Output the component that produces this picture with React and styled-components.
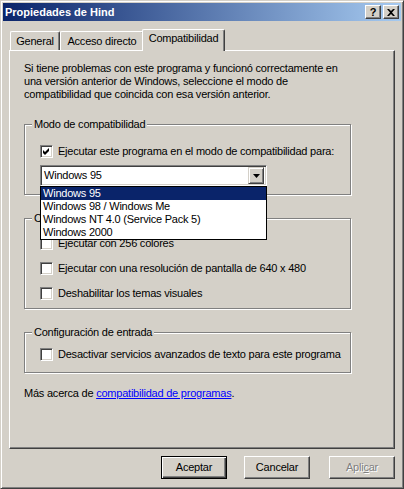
import styled, { createGlobalStyle } from 'styled-components';

const GlobalStyle = createGlobalStyle`
  html, body {
    margin: 0;
    padding: 0;
    background: #d4d0c8;
  }
  body {
    font-family: "Liberation Sans", Arial, sans-serif;
    font-size: 11px;
    letter-spacing: -0.22px;
    color: #000;
  }
`;

const Window = styled.div`
  width: 404px;
  height: 489px;
  box-sizing: border-box;
  background: #d4d0c8;
  border: 1px solid;
  border-color: #d4d0c8 #404040 #404040 #d4d0c8;
  box-shadow: inset 1px 1px #fff, inset -1px -1px #808080;
  padding: 2px;
  display: flex;
  flex-direction: column;
`;

const TitleBar = styled.div`
  height: 18px;
  padding: 0 2px;
  display: flex;
  align-items: center;
  justify-content: space-between;
  background: linear-gradient(to right, #0a246a, #a6caf0);
`;

const Title = styled.span`
  color: #fff;
  font-weight: bold;
  font-size: 11px;
  letter-spacing: 0;
`;

const TitleButtons = styled.div`
  display: flex;
  gap: 2px;
`;

const TitleButton = styled.div`
  width: 16px;
  height: 14px;
  box-sizing: border-box;
  background: #d4d0c8;
  border: 1px solid;
  border-color: #fff #404040 #404040 #fff;
  box-shadow: inset -1px -1px #808080;
  display: flex;
  align-items: center;
  justify-content: center;
  font-weight: bold;
  font-size: 11px;
  line-height: 11px;
`;

const TabStrip = styled.div`
  margin-top: 8px;
  height: 21px;
  padding-left: 7px;
  display: flex;
  align-items: flex-end;
`;

const Tab = styled.div`
  position: relative;
  width: ${(p) => p.$w}px;
  height: ${(p) => (p.$active ? 22 : 19)}px;
  margin: ${(p) => (p.$active ? '0 -2px -1px -2px' : '0')};
  z-index: ${(p) => (p.$active ? 2 : 1)};
  box-sizing: border-box;
  padding-top: ${(p) => (p.$active ? 2 : 3)}px;
  background: #d4d0c8;
  border: 1px solid;
  border-color: #fff #404040 #d4d0c8 #fff;
  border-bottom: none;
  border-radius: 2px 2px 0 0;
  box-shadow: inset -1px 0 #808080;
  text-align: center;
  line-height: 13px;
`;

const Panel = styled.div`
  position: relative;
  margin-left: 6px;
  width: 386px;
  height: 399px;
  box-sizing: border-box;
  border: 1px solid;
  border-color: #fff #404040 #404040 #fff;
  box-shadow: inset -1px -1px #808080;
  padding: 11px 14px 0 14px;
  display: flex;
  flex-direction: column;
  align-items: flex-start;
`;

const Intro = styled.p`
  margin: 0;
  line-height: 13px;
`;

const Group = styled.fieldset`
  margin: 17px 0 0 0;
  padding: 0;
  width: 327px;
  box-sizing: border-box;
  min-inline-size: 0;
  border: 1px solid #808080;
  box-shadow: inset 1px 1px #fff, 1px 1px #fff;
`;

const Legend = styled.legend`
  margin-left: 7px;
  padding: 0 2px;
  line-height: 13px;
  background: #d4d0c8;
`;

const GroupBody = styled.div`
  padding: ${(p) => p.$pt}px 0 ${(p) => p.$pb}px 15px;
  display: flex;
  flex-direction: column;
  gap: ${(p) => p.$gap || 0}px;
`;

const CheckRow = styled.label`
  display: flex;
  align-items: center;
  gap: 5px;
  height: 13px;
  line-height: 13px;
  white-space: nowrap;
`;

const Box = styled.span`
  width: 13px;
  height: 13px;
  box-sizing: border-box;
  flex: none;
  background: #fff;
  border: 1px solid;
  border-color: #808080 #fff #fff #808080;
  box-shadow: inset 1px 1px #404040, inset -1px -1px #d4d0c8;
  display: flex;
  align-items: center;
  justify-content: center;
`;

const Combo = styled.div`
  position: relative;
  margin-top: 7px;
  width: 227px;
  height: 21px;
  box-sizing: border-box;
  background: #fff;
  border: 1px solid;
  border-color: #808080 #fff #fff #808080;
  box-shadow: inset 1px 1px #404040, inset -1px -1px #d4d0c8;
  padding: 2px;
  display: flex;
  align-items: center;
`;

const ComboText = styled.span`
  flex: 1;
  padding-left: 1px;
  line-height: 13px;
`;

const ComboButton = styled.span`
  width: 16px;
  height: 17px;
  box-sizing: border-box;
  background: #d4d0c8;
  border: 1px solid;
  border-color: #d4d0c8 #404040 #404040 #d4d0c8;
  box-shadow: inset 1px 1px #fff, inset -1px -1px #808080;
  display: flex;
  align-items: center;
  justify-content: center;
`;

const DropList = styled.ul`
  position: absolute;
  top: 20px;
  left: -1px;
  width: 227px;
  box-sizing: border-box;
  margin: 0;
  padding: 0;
  list-style: none;
  background: #fff;
  border: 1px solid #000;
  z-index: 3;
`;

const DropItem = styled.li`
  height: 13px;
  line-height: 13px;
  padding-left: 2px;
  white-space: nowrap;
  background: ${(p) => (p.$selected ? '#0a246a' : 'transparent')};
  color: ${(p) => (p.$selected ? '#fff' : '#000')};
`;

const MoreInfo = styled.p`
  margin: 14px 0 0 0;
  line-height: 13px;
`;

const Link = styled.a`
  color: #0000ff;
  text-decoration: underline;
`;

const ButtonRow = styled.div`
  margin-top: 7px;
  display: flex;
  justify-content: flex-end;
  gap: 17px;
  padding-right: 6px;
`;

const Button = styled.div`
  width: 66px;
  height: 23px;
  box-sizing: border-box;
  background: #d4d0c8;
  border: 1px solid;
  border-color: ${(p) =>
    p.$default ? '#000' : '#fff #404040 #404040 #fff'};
  box-shadow: ${(p) =>
    p.$default
      ? 'inset 1px 1px #fff, inset -1px -1px #404040, inset -2px -2px #808080'
      : 'inset -1px -1px #808080'};
  display: flex;
  align-items: center;
  justify-content: center;
  line-height: 13px;
  color: ${(p) => (p.$disabled ? '#808080' : '#000')};
  text-shadow: ${(p) => (p.$disabled ? '1px 1px #fff' : 'none')};
  margin-left: ${(p) => p.$extra || 0}px;
`;

const Check = () => (
  <svg width="7" height="7" viewBox="0 0 7 7">
    <path d="M0 2 L2 4 L6 0 L6 3 L2 7 L0 5 Z" fill="#000" />
  </svg>
);

const CheckBox = ({ checked, children }) => (
  <CheckRow>
    <Box>{checked && <Check />}</Box>
    <span>{children}</span>
  </CheckRow>
);

const versions = [
  'Windows 95',
  'Windows 98 / Windows Me',
  'Windows NT 4.0 (Service Pack 5)',
  'Windows 2000',
];

export default function App() {
  return (
    <>
      <GlobalStyle />
      <Window>
        <TitleBar>
          <Title>Propiedades de Hind</Title>
          <TitleButtons>
            <TitleButton>?</TitleButton>
            <TitleButton>
              <svg width="8" height="7" viewBox="0 0 8 7">
                <path
                  d="M0 0 H2 L4 2 L6 0 H8 L5 3.5 L8 7 H6 L4 5 L2 7 H0 L3 3.5 Z"
                  fill="#000"
                />
              </svg>
            </TitleButton>
          </TitleButtons>
        </TitleBar>

        <TabStrip>
          <Tab $w={50}>General</Tab>
          <Tab $w={84}>Acceso directo</Tab>
          <Tab $w={83} $active>
            Compatibilidad
          </Tab>
        </TabStrip>

        <Panel>
          <Intro>
            Si tiene problemas con este programa y funcionó correctamente en
            <br />
            una versión anterior de Windows, seleccione el modo de
            <br />
            compatibilidad que coincida con esa versión anterior.
          </Intro>

          <Group>
            <Legend>Modo de compatibilidad</Legend>
            <GroupBody $pt={14} $pb={8}>
              <CheckBox checked>
                Ejecutar este programa en el modo de compatibilidad para:
              </CheckBox>
              <Combo>
                <ComboText>Windows 95</ComboText>
                <ComboButton>
                  <svg width="7" height="4" viewBox="0 0 7 4">
                    <path d="M0 0 H7 L3.5 4 Z" fill="#000" />
                  </svg>
                </ComboButton>
                <DropList>
                  {versions.map((v, i) => (
                    <DropItem key={v} $selected={i === 0}>
                      {v}
                    </DropItem>
                  ))}
                </DropList>
              </Combo>
            </GroupBody>
          </Group>

          <Group>
            <Legend>Configuración de pantalla</Legend>
            <GroupBody $pt={12} $pb={8} $gap={12}>
              <CheckBox>Ejecutar con 256 colores</CheckBox>
              <CheckBox>
                Ejecutar con una resolución de pantalla de 640 x 480
              </CheckBox>
              <CheckBox>Deshabilitar los temas visuales</CheckBox>
            </GroupBody>
          </Group>

          <Group>
            <Legend>Configuración de entrada</Legend>
            <GroupBody $pt={9} $pb={11}>
              <CheckBox>
                Desactivar servicios avanzados de texto para este programa
              </CheckBox>
            </GroupBody>
          </Group>

          <MoreInfo>
            Más acerca de <Link href="#">compatibilidad de programas</Link>.
          </MoreInfo>
        </Panel>

        <ButtonRow>
          <Button $default>Aceptar</Button>
          <Button>Cancelar</Button>
          <Button $disabled $extra={2}>
            Apli<u>c</u>ar
          </Button>
        </ButtonRow>
      </Window>
    </>
  );
}
